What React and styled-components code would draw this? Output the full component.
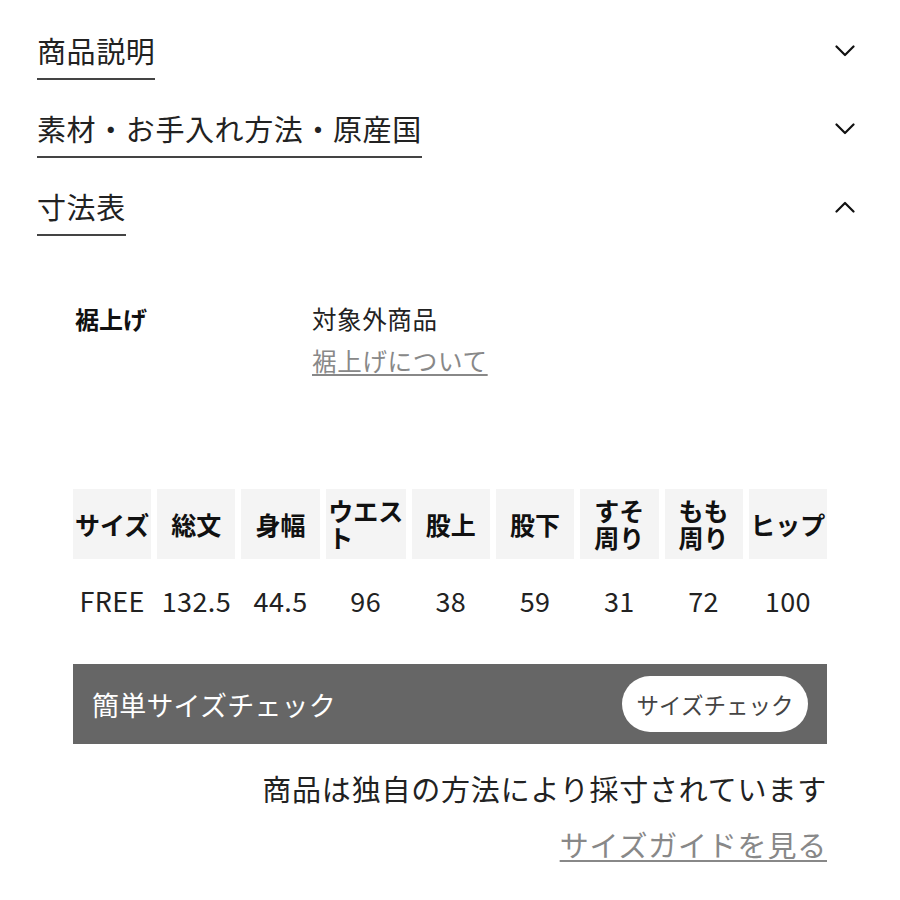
import React from "react";
import styled, { createGlobalStyle } from "styled-components";

const Global = createGlobalStyle`
  html, body { margin: 0; padding: 0; background: #fff; }
  body {
    font-family: "Noto Sans CJK JP", "Noto Sans", sans-serif;
    color: #222;
  }
`;

const Page = styled.div`
  width: 900px;
  box-sizing: border-box;
  padding: 30px 44px 40px 37px;
`;

const Item = styled.section`
  margin-bottom: 28px;
`;

const Header = styled.div`
  display: flex;
  justify-content: space-between;
  align-items: flex-start;
`;

const Title = styled.span`
  display: inline-block;
  font-size: 29px;
  line-height: 40px;
  letter-spacing: 0.6px;
  padding-bottom: 8px;
  border-bottom: 2px solid #444;
  color: #222;
`;

const Chevron = styled.span`
  height: 42px;
  display: flex;
  align-items: center;
  justify-content: center;
  width: 22px;
`;

const ChevronIcon = ({ up }) => (
  <svg width="20" height="12" viewBox="0 0 20 12" fill="none">
    <polyline
      points={up ? "1.5,10.5 10,2 18.5,10.5" : "1.5,1.5 10,10 18.5,1.5"}
      stroke="#111"
      strokeWidth="2.2"
      strokeLinecap="round"
      strokeLinejoin="round"
    />
  </svg>
);

const Content = styled.div`
  padding: 62px 29px 0 36px;
`;

const InfoRow = styled.div`
  display: grid;
  grid-template-columns: 237px 1fr;
  padding-left: 2px;
`;

const Label = styled.div`
  font-size: 24px;
  line-height: 42px;
  font-weight: 700;
  color: #111;
`;

const Value = styled.div`
  font-size: 24.5px;
  line-height: 42px;
  letter-spacing: 0.6px;
  color: #222;
`;

const Link = styled.a`
  display: block;
  width: fit-content;
  color: #888;
  text-decoration: underline;
  text-decoration-thickness: 1.5px;
  text-underline-offset: 3px;
  letter-spacing: ${(p) => p.$ls || "0.7px"};
  font-size: ${(p) => p.$size || "24.5px"};
  line-height: ${(p) => p.$lh || "42px"};
  margin-left: ${(p) => (p.$right ? "auto" : "0")};
  margin-top: ${(p) => p.$mt || "0"};
`;

const Table = styled.div`
  margin-top: 107px;
  display: grid;
  grid-template-columns: repeat(9, 1fr);
  column-gap: 6px;
`;

const HeadCell = styled.div`
  height: 70px;
  background: #f4f4f4;
  display: flex;
  flex-direction: column;
  align-items: center;
  justify-content: center;
  padding: 0 1px;
  font-size: 25px;
  line-height: 27px;
  font-weight: 700;
  color: #111;
  box-sizing: border-box;
`;

const HeadText = styled.div`
  width: 100%;
  text-align: ${(p) => (p.$wrap ? "left" : "center")};
  padding-left: ${(p) => (p.$wrap ? "3px" : "0")};
  white-space: nowrap;
`;

const HeadTwoLine = styled.div`
  display: flex;
  flex-direction: column;
  align-items: flex-start;
`;

const DataCell = styled.div`
  height: 82px;
  display: flex;
  align-items: center;
  justify-content: center;
  font-size: 27px;
  letter-spacing: 0.4px;
  color: #222;
  white-space: nowrap;
`;

const CheckBar = styled.div`
  margin-top: 23px;
  height: 80px;
  background: #666;
  display: flex;
  align-items: center;
  justify-content: space-between;
  padding: 0 19px;
  box-sizing: border-box;
`;

const BarTitle = styled.span`
  color: #fff;
  font-size: 27px;
  letter-spacing: 0.2px;
`;

const PillButton = styled.button`
  height: 56px;
  width: 186px;
  border: none;
  border-radius: 28px;
  background: #fff;
  color: #444;
  font-family: inherit;
  font-size: 22.5px;
  padding: 0;
`;

const Note = styled.p`
  margin: 22px 0 0;
  text-align: right;
  font-size: 29px;
  line-height: 44px;
  letter-spacing: 0.8px;
  color: #222;
`;

const heads = [
  ["サイズ"],
  ["総文"],
  ["身幅"],
  ["ウエス", "ト"],
  ["股上"],
  ["股下"],
  ["すそ", "周り"],
  ["もも", "周り"],
  ["ヒップ"],
];
const values = ["FREE", "132.5", "44.5", "96", "38", "59", "31", "72", "100"];

export default function App() {
  return (
    <Page>
      <Global />
      <Item>
        <Header>
          <Title>商品説明</Title>
          <Chevron><ChevronIcon /></Chevron>
        </Header>
      </Item>
      <Item>
        <Header>
          <Title>素材・お手入れ方法・原産国</Title>
          <Chevron><ChevronIcon /></Chevron>
        </Header>
      </Item>
      <Item>
        <Header>
          <Title>寸法表</Title>
          <Chevron><ChevronIcon up /></Chevron>
        </Header>
        <Content>
          <InfoRow>
            <Label>裾上げ</Label>
            <div>
              <Value>対象外商品</Value>
              <Link href="#">裾上げについて</Link>
            </div>
          </InfoRow>
          <Table>
            {heads.map((h, i) => (
              <HeadCell key={i}>
                {h.length === 1 ? (
                  <HeadText>{h[0]}</HeadText>
                ) : h[0].length === 3 ? (
                  <>
                    <HeadText $wrap>{h[0]}</HeadText>
                    <HeadText $wrap>{h[1]}</HeadText>
                  </>
                ) : (
                  <HeadTwoLine>
                    <span>{h[0]}</span>
                    <span>{h[1]}</span>
                  </HeadTwoLine>
                )}
              </HeadCell>
            ))}
            {values.map((v, i) => (
              <DataCell key={i}>{v}</DataCell>
            ))}
          </Table>
          <CheckBar>
            <BarTitle>簡単サイズチェック</BarTitle>
            <PillButton>サイズチェック</PillButton>
          </CheckBar>
          <Note>商品は独自の方法により採寸されています</Note>
          <Link href="#" $right $size="29px" $lh="44px" $mt="12px" $ls="0.8px">サイズガイドを見る</Link>
        </Content>
      </Item>
    </Page>
  );
}
